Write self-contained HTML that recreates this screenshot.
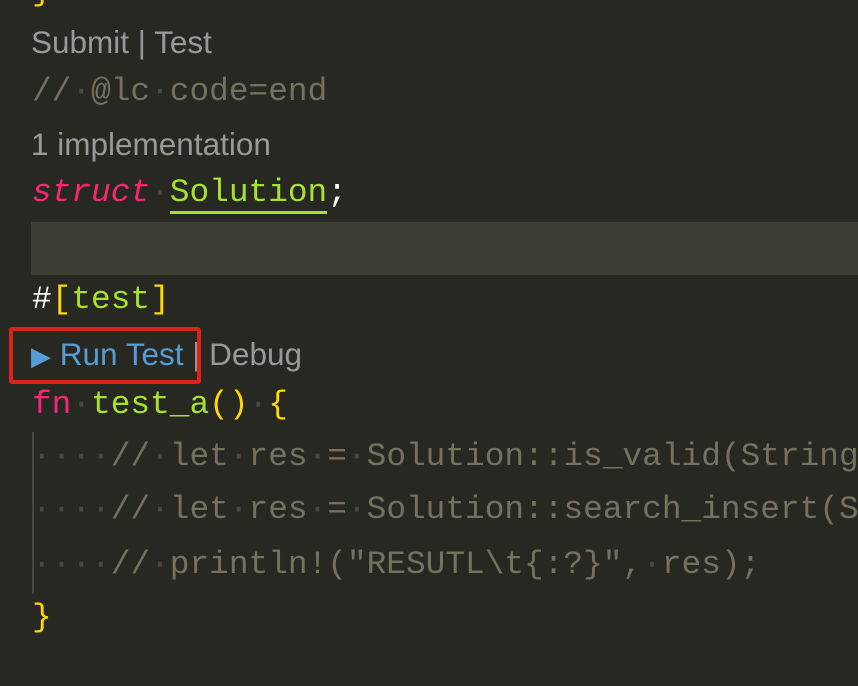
<!DOCTYPE html>
<html><head><meta charset="utf-8"><style>
html,body{margin:0;padding:0;}
body{width:858px;height:686px;background:#272822;position:relative;overflow:hidden;}
.l{position:absolute;left:32px;height:52px;line-height:52px;white-space:pre;font-family:"Liberation Mono",monospace;font-size:32.8px;color:#f8f8f2;}
.cl{position:absolute;left:31px;height:40px;line-height:40px;white-space:pre;font-family:"Liberation Sans",sans-serif;font-size:31.5px;color:#999;}
.c{color:#75715e}.d{color:#4a4a42}.p{color:#f92672}.g{color:#a6e22e}.y{color:#ffd700}.b{color:#569cd6}
</style></head><body>
<div class="l y" style="top:-34px">}</div>
<div class="cl" style="top:22px">Submit | Test</div>
<div class="l c" style="top:66px">//<span class="d">·</span>@lc<span class="d">·</span>code=end</div>
<div class="cl" style="top:124px">1 implementation</div>
<div class="l" style="top:167px"><i class="p">struct</i><span class="d">·</span><span class="g" style="border-bottom:3px solid #a6e22e;line-height:36px;display:inline-block">Solution</span>;</div>
<div style="position:absolute;left:31px;top:222px;width:827px;height:53px;background:#3e3d32"></div>
<div class="l" style="top:274px">#<span class="y">[</span><span class="g">test</span><span class="y">]</span></div>
<div class="cl" style="top:334px"><span class="b"><span style="font-size:26px">▶</span> Run Test</span> | Debug</div>
<div style="position:absolute;left:9px;top:327px;width:184px;height:49px;border:4px solid #d8221a;border-radius:3px"></div>
<div class="l" style="top:379px"><span class="p">fn</span><span class="d">·</span><span class="g">test_a</span><span class="y">()</span><span class="d">·</span><span class="y">{</span></div>
<div style="position:absolute;left:32px;top:432px;width:2px;height:162px;background:#464741"></div>
<div class="l c" style="top:431px"><span class="d">····</span>//<span class="d">·</span>let<span class="d">·</span>res<span class="d">·</span>=<span class="d">·</span>Solution::is_valid(String</div>
<div class="l c" style="top:484px"><span class="d">····</span>//<span class="d">·</span>let<span class="d">·</span>res<span class="d">·</span>=<span class="d">·</span>Solution::search_insert(S</div>
<div class="l c" style="top:539px"><span class="d">····</span>//<span class="d">·</span>println!("RESUTL\t{:?}",<span class="d">·</span>res);</div>
<div class="l y" style="top:592px">}</div>
</body></html>
